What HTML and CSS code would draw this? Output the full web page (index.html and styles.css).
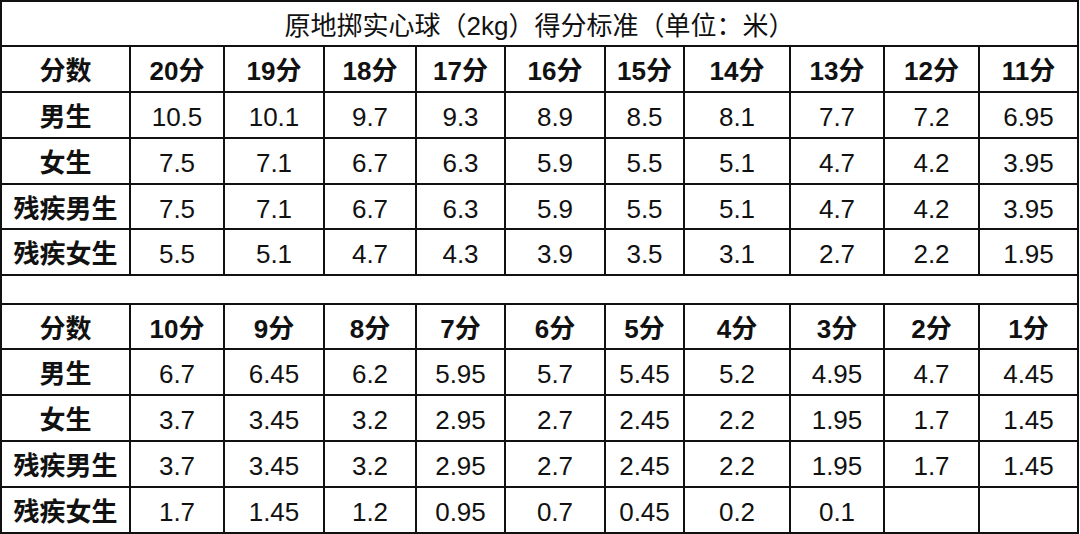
FILE: index.html
```html
<!DOCTYPE html>
<html lang="zh-CN">
<head>
<meta charset="utf-8">
<title>原地掷实心球（2kg）得分标准</title>
<link rel="stylesheet" href="styles.css">
</head>
<body>
<div class="sheet">
  <div class="cell title">原地掷实心球（2kg）得分标准（单位：米）</div>

  <div class="cell head">分数</div>
  <div class="cell head">20分</div><div class="cell head">19分</div><div class="cell head">18分</div><div class="cell head">17分</div><div class="cell head">16分</div><div class="cell head">15分</div><div class="cell head">14分</div><div class="cell head">13分</div><div class="cell head">12分</div><div class="cell head">11分</div>

  <div class="cell head">男生</div>
  <div class="cell">10.5</div><div class="cell">10.1</div><div class="cell">9.7</div><div class="cell">9.3</div><div class="cell">8.9</div><div class="cell">8.5</div><div class="cell">8.1</div><div class="cell">7.7</div><div class="cell">7.2</div><div class="cell">6.95</div>

  <div class="cell head">女生</div>
  <div class="cell">7.5</div><div class="cell">7.1</div><div class="cell">6.7</div><div class="cell">6.3</div><div class="cell">5.9</div><div class="cell">5.5</div><div class="cell">5.1</div><div class="cell">4.7</div><div class="cell">4.2</div><div class="cell">3.95</div>

  <div class="cell head">残疾男生</div>
  <div class="cell">7.5</div><div class="cell">7.1</div><div class="cell">6.7</div><div class="cell">6.3</div><div class="cell">5.9</div><div class="cell">5.5</div><div class="cell">5.1</div><div class="cell">4.7</div><div class="cell">4.2</div><div class="cell">3.95</div>

  <div class="cell head">残疾女生</div>
  <div class="cell">5.5</div><div class="cell">5.1</div><div class="cell">4.7</div><div class="cell">4.3</div><div class="cell">3.9</div><div class="cell">3.5</div><div class="cell">3.1</div><div class="cell">2.7</div><div class="cell">2.2</div><div class="cell">1.95</div>

  <div class="cell spacer"></div>

  <div class="cell head">分数</div>
  <div class="cell head">10分</div><div class="cell head">9分</div><div class="cell head">8分</div><div class="cell head">7分</div><div class="cell head">6分</div><div class="cell head">5分</div><div class="cell head">4分</div><div class="cell head">3分</div><div class="cell head">2分</div><div class="cell head">1分</div>

  <div class="cell head">男生</div>
  <div class="cell">6.7</div><div class="cell">6.45</div><div class="cell">6.2</div><div class="cell">5.95</div><div class="cell">5.7</div><div class="cell">5.45</div><div class="cell">5.2</div><div class="cell">4.95</div><div class="cell">4.7</div><div class="cell">4.45</div>

  <div class="cell head">女生</div>
  <div class="cell">3.7</div><div class="cell">3.45</div><div class="cell">3.2</div><div class="cell">2.95</div><div class="cell">2.7</div><div class="cell">2.45</div><div class="cell">2.2</div><div class="cell">1.95</div><div class="cell">1.7</div><div class="cell">1.45</div>

  <div class="cell head">残疾男生</div>
  <div class="cell">3.7</div><div class="cell">3.45</div><div class="cell">3.2</div><div class="cell">2.95</div><div class="cell">2.7</div><div class="cell">2.45</div><div class="cell">2.2</div><div class="cell">1.95</div><div class="cell">1.7</div><div class="cell">1.45</div>

  <div class="cell head">残疾女生</div>
  <div class="cell">1.7</div><div class="cell">1.45</div><div class="cell">1.2</div><div class="cell">0.95</div><div class="cell">0.7</div><div class="cell">0.45</div><div class="cell">0.2</div><div class="cell">0.1</div><div class="cell"></div><div class="cell"></div>
</div>
</body>
</html>
```

FILE: styles.css
```css
html, body {
  margin: 0;
  padding: 0;
  background: #ffffff;
}

.sheet {
  width: 1079px;
  height: 534px;
  box-sizing: border-box;
  border-top: 2px solid #111;
  border-left: 2px solid #111;
  display: grid;
  grid-template-columns: 129px 94px 100px 92px 89px 100px 79px 106px 94px 95px 99px;
  grid-template-rows: 45px 46px 46px 46px 45px 46px 29px 45px 46px 46px 46px 46px;
  font-family: "Liberation Sans", "Noto Sans CJK SC", sans-serif;
  font-size: 26px;
  color: #111;
  background: #fff;
}

.cell {
  box-sizing: border-box;
  border-right: 2px solid #111;
  border-bottom: 2px solid #111;
  display: flex;
  align-items: center;
  justify-content: center;
  padding-top: 4px;
  line-height: 1;
  white-space: nowrap;
}

.title {
  grid-column: 1 / -1;
  font-weight: 400;
}

.spacer {
  grid-column: 1 / -1;
}

.head {
  font-weight: 700;
}
```
